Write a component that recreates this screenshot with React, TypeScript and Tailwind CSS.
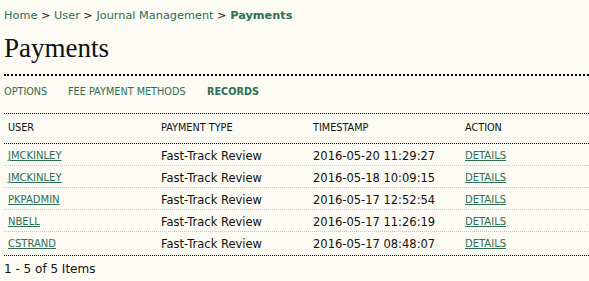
import React from "react";

const rows = [
  ["JMCKINLEY", "2016-05-20 11:29:27"],
  ["JMCKINLEY", "2016-05-18 10:09:15"],
  ["PKPADMIN", "2016-05-17 12:52:54"],
  ["NBELL", "2016-05-17 11:26:19"],
  ["CSTRAND", "2016-05-17 08:48:07"],
];

export default function App() {
  return (
    <div
      className="w-[589px] h-[281px] bg-[#fbfaf3] text-[#111] overflow-hidden pl-[4px]"
      style={{ fontFamily: '"DejaVu Sans", Verdana, sans-serif' }}
    >
      <div className="pt-[8px] h-[28px] text-[11.3px] leading-[15px] text-[#2d6e55]">
        <a>Home</a>
        <span className="text-[#111]"> &gt; </span>
        <a>User</a>
        <span className="text-[#111]"> &gt; </span>
        <a>Journal Management</a>
        <span className="text-[#111]"> &gt; </span>
        <span className="font-bold">Payments</span>
      </div>
      <h1
        className="h-[46px] text-[27px] leading-[34px] pt-[3px] text-[#111]"
        style={{ fontFamily: '"Liberation Serif", "Times New Roman", serif' }}
      >
        Payments
      </h1>
      <div className="border-t-2 border-dotted border-black" />
      <div className="flex h-[37px] pt-[10px] text-[9.7px] leading-[12px] text-[#2d6e55] uppercase">
        <span className="w-[64px]">Options</span>
        <span className="w-[139px]">Fee Payment Methods</span>
        <span className="font-bold">Records</span>
      </div>
      <div className="border-t border-dotted border-black" />
      <div className="grid grid-cols-[153px_152px_152px_1fr] h-[29px] items-center pl-[4px] text-[9.7px] uppercase">
        <span>User</span>
        <span>Payment Type</span>
        <span>Timestamp</span>
        <span>Action</span>
      </div>
      <div className="border-t border-dotted border-black" />
      {rows.map(([user, ts], i) => (
        <div
          key={i}
          className={
            "grid grid-cols-[153px_152px_152px_1fr] h-[22px] items-start pt-[5px] pl-[4px] leading-[15px] " +
            (i < rows.length - 1 ? "border-b border-dotted border-[#c8c8c0]" : "h-[23px]")
          }
        >
          <a className="text-[10px] underline text-[#2d6e55] -mt-[1px]">{user}</a>
          <span className="text-[11.5px]">Fast-Track Review</span>
          <span className="text-[11.5px]">{ts}</span>
          <a className="text-[10px] underline text-[#2d6e55] -mt-[1px]">DETAILS</a>
        </div>
      ))}
      <div className="border-t border-dotted border-black" />
      <div className="pt-[6px] text-[12px] leading-[14px]">1 - 5 of 5 Items</div>
    </div>
  );
}
